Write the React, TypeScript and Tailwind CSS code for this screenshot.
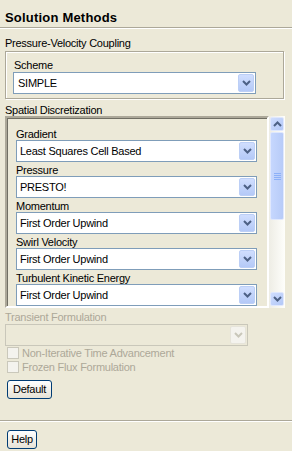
const ArrowDown = ({ color = "#4d6185" }: { color?: string }) => (
  <svg width="9" height="6" viewBox="0 0 9 6">
    <path d="M1 1 L4.5 4.5 L8 1" fill="none" stroke={color} strokeWidth="2" />
  </svg>
);

const ArrowUp = () => (
  <svg width="9" height="6" viewBox="0 0 9 6">
    <path d="M1 5 L4.5 1.5 L8 5" fill="none" stroke="#4d6185" strokeWidth="2" />
  </svg>
);

const DropButton = () => (
  <div className="mr-[1px] flex h-[18px] w-[16px] shrink-0 items-center justify-center rounded-[2px] border border-[#bccff6] bg-gradient-to-b from-[#d0defe] to-[#b4c9f7]">
    <ArrowDown />
  </div>
);

const Combo = ({ value, className }: { value: string; className: string }) => (
  <div className={`flex h-[22px] items-center border border-[#7f9db9] bg-white ${className}`}>
    <span className="flex-1 pl-[3px] leading-[20px] text-black">{value}</span>
    <DropButton />
  </div>
);

const Label = ({ text }: { text: string }) => (
  <div className="h-[12px] leading-[12px] text-black">{text}</div>
);

const fields = [
  { label: "Gradient", value: "Least Squares Cell Based" },
  { label: "Pressure", value: "PRESTO!" },
  { label: "Momentum", value: "First Order Upwind" },
  { label: "Swirl Velocity", value: "First Order Upwind" },
  { label: "Turbulent Kinetic Energy", value: "First Order Upwind" },
];

const App = () => {
  return (
    <div className="relative h-[451px] w-[292px] overflow-hidden bg-[#ece9d8] font-['Liberation_Sans',Arial,sans-serif] text-[11px] tracking-[-0.25px] text-black">
      {/* header */}
      <div className="h-[27px] pl-[5px] pt-[11px]">
        <div className="h-[13px] text-[13px] font-bold leading-[13px] tracking-[0.2px]">
          Solution Methods
        </div>
      </div>
      <div className="h-[1px] bg-[#aca899]" />
      <div className="h-[1px] bg-white" />

      {/* pressure-velocity coupling */}
      <div className="mt-[8px] pl-[5px]">
        <Label text="Pressure-Velocity Coupling" />
      </div>
      <div className="ml-[5px] mt-[2px] w-[279px] border border-[#aca899] px-[7px] pb-[4px] pt-[7px] shadow-[inset_1px_1px_0_#fff,1px_1px_0_#fff]">
        <div className="pl-[1px]">
          <Label text="Scheme" />
        </div>
        <div className="mt-[1px]">
          <Combo value="SIMPLE" className="w-[243px] [&>span]:pl-[4px]" />
        </div>
      </div>

      {/* spatial discretization */}
      <div className="mt-[5px] pl-[5px]">
        <Label text="Spatial Discretization" />
      </div>
      <div className="ml-[5px] flex h-[192px]">
        <div className="h-[192px] w-[264px] border-2 border-b-white border-l-[#aca899] border-r-white border-t-[#aca899] pl-[9px] pt-[10px] shadow-[inset_1px_1px_0_#716f64]">
          <div className="flex flex-col gap-[2px]">
            {fields.map((f) => (
              <div key={f.label}>
                <Label text={f.label} />
                <Combo value={f.value} className="w-[241px]" />
              </div>
            ))}
          </div>
        </div>
        <div className="flex h-[192px] w-[16px] flex-col items-center bg-gradient-to-r from-[#eeede5] to-[#fefefb] pb-[2px] pt-[1px]">
          <div className="flex h-[14px] w-[14px] items-center justify-center rounded-[2px] border border-[#e0e8fd] bg-gradient-to-br from-[#cfddfe] to-[#b3c8f7]">
            <ArrowUp />
          </div>
          <div className="mt-[1px] flex h-[88px] w-[14px] flex-col items-center justify-center gap-[1px] rounded-[2px] border border-[#e0e8fd] bg-gradient-to-r from-[#c6d7fe] to-[#b7cbf8]">
            <div className="h-[1px] w-[7px] bg-[#8cb0f8]" />
            <div className="h-[1px] w-[7px] bg-[#8cb0f8]" />
            <div className="h-[1px] w-[7px] bg-[#8cb0f8]" />
            <div className="h-[1px] w-[7px] bg-[#8cb0f8]" />
          </div>
          <div className="flex-1" />
          <div className="flex h-[14px] w-[14px] items-center justify-center rounded-[2px] border border-[#e0e8fd] bg-gradient-to-br from-[#cfddfe] to-[#b3c8f7]">
            <ArrowDown />
          </div>
        </div>
      </div>

      {/* transient formulation (disabled) */}
      <div className="mt-[3px] h-[12px] pl-[5px] leading-[12px] text-[#aca899]">
        Transient Formulation
      </div>
      <div className="ml-[5px] mt-[1px] flex h-[22px] w-[243px] items-center justify-end border border-[#c9c7ba]">
        <div className="mr-[1px] flex h-[18px] w-[16px] items-center justify-center rounded-[2px] border border-[#e6e4da] bg-[#f4f3ee]">
          <ArrowDown color="#c9c7ba" />
        </div>
      </div>

      <div className="ml-[7px] mt-[1px] flex flex-col">
        <div className="flex h-[14px] items-start gap-[3px]">
          <div className="h-[12px] w-[12px] border border-[#cac8bb] bg-[#f4f3ee]" />
          <span className="h-[12px] leading-[12px] text-[#aca899]">Non-Iterative Time Advancement</span>
        </div>
        <div className="flex h-[14px] items-start gap-[3px]">
          <div className="h-[12px] w-[12px] border border-[#cac8bb] bg-[#f4f3ee]" />
          <span className="h-[12px] leading-[12px] text-[#aca899]">Frozen Flux Formulation</span>
        </div>
      </div>

      <div className="ml-[7px] mt-[5px]">
        <button className="h-[19px] w-[45px] rounded-[3px] border border-[#003c74] bg-gradient-to-b from-white to-[#e6e2d6] leading-[17px] text-black">
          Default
        </button>
      </div>

      <div className="mt-[21px] h-[1px] bg-[#aca899]" />
      <div className="h-[1px] bg-white" />

      <div className="ml-[7px] mt-[8px]">
        <button className="h-[19px] w-[30px] rounded-[3px] border border-[#003c74] bg-gradient-to-b from-white to-[#e6e2d6] leading-[17px] text-black">
          Help
        </button>
      </div>
    </div>
  );
};

export default App;
